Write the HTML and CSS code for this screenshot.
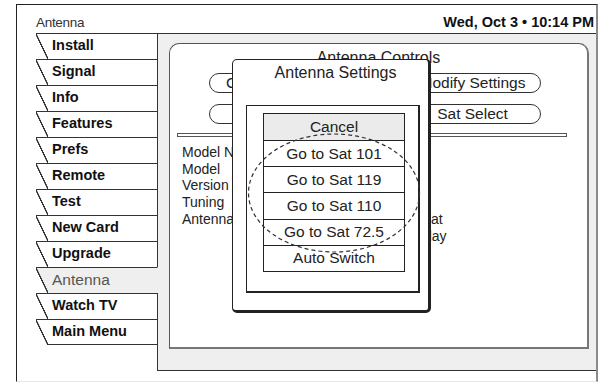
FILE: index.html
```html
<!DOCTYPE html>
<html>
<head>
<meta charset="utf-8">
<link rel="stylesheet" href="styles.css">
</head>
<body>
<div class="screen">
  <header class="top">
    <span class="crumb">Antenna</span>
    <span class="clock">Wed, Oct 3 &#8226; 10:14 PM</span>
  </header>
  <div class="body">
    <nav class="tabs">
      <div class="tab">Install</div>
      <div class="tab">Signal</div>
      <div class="tab">Info</div>
      <div class="tab">Features</div>
      <div class="tab">Prefs</div>
      <div class="tab">Remote</div>
      <div class="tab">Test</div>
      <div class="tab">New Card</div>
      <div class="tab">Upgrade</div>
      <div class="tab sel">Antenna</div>
      <div class="tab">Watch TV</div>
      <div class="tab last">Main Menu</div>
      <div class="tab-fill"></div>
    </nav>
    <main class="panel">
      <section class="card">
        <h1 class="card-title">Antenna Controls</h1>
        <div class="pills">
          <span class="pill pill-left">Check Switch</span>
          <span class="pill pill-right">Modify Settings</span>
        </div>
        <div class="pills second">
          <span class="pill pill-left">Test</span>
          <span class="pill pill-right">Sat Select</span>
        </div>
        <div class="rule"></div>
        <div class="info">
          <span>Model Name</span><span></span>
          <span>Model</span><span></span>
          <span>Version</span><span></span>
          <span>Tuning</span><span></span>
          <span>Antenna</span><span>Dual Sat</span>
          <span></span><span>No Relay</span>
        </div>
        <div class="dialog">
          <div class="dialog-title">Antenna Settings</div>
          <div class="dialog-box">
            <div class="list">
              <div class="item cancel">Cancel</div>
              <div class="item">Go to Sat 101</div>
              <div class="item">Go to Sat 119</div>
              <div class="item">Go to Sat 110</div>
              <div class="item">Go to Sat 72.5</div>
              <div class="item">Auto Switch</div>
            </div>
          </div>
          <svg class="ring" width="174" height="122" viewBox="0 0 174 122">
            <ellipse cx="87" cy="61" rx="85.5" ry="59" fill="none" stroke="#333" stroke-width="1.2" stroke-dasharray="4 3"/>
          </svg>
        </div>
      </section>
    </main>
  </div>
</div>
</body>
</html>
```
FILE: styles.css
```css
* { box-sizing: border-box; }
html, body { margin: 0; padding: 0; background: #fff; }
body {
  font-family: "Liberation Sans", Arial, sans-serif;
  color: #222;
}
.screen {
  margin: 4px 2px 0 16px;
  height: 378px;
  border-top: 1px solid #222;
  border-left: 1px solid #222;
  border-right: 2px solid #8a8a8a;
  border-bottom: 1px solid #e6e6e6;
  display: flex;
  flex-direction: column;
}
.top {
  height: 28px;
  display: flex;
  justify-content: space-between;
  align-items: baseline;
  padding: 9px 2px 0 19px;
  line-height: 16px;
}
.crumb { color: #333; font-size: 13.5px; letter-spacing: -0.3px; }
.clock { font-weight: bold; color: #111; font-size: 14.5px; }
.body { display: flex; height: 338px; }
.tabs {
  width: 122px;
  margin-left: 19px;
  display: flex;
  flex-direction: column;
}
.tab {
  height: 26px;
  flex: none;
  border-top: 1px solid #333;
  border-right: 1px solid #333;
  padding-left: 16px;
  line-height: 22px;
  font-weight: bold;
  font-size: 14.5px;
  color: #111;
  background:
    linear-gradient(to top right, #fff calc(50% - 0.9px), #333 calc(50% - 0.5px), #333 calc(50% + 0.5px), #fff calc(50% + 0.9px)) 0 0 / 12px 100% no-repeat;
}
.tab.sel {
  font-weight: normal;
  font-size: 15.5px;
  line-height: 24px;
  color: #555;
  border-right-color: #efefef;
  background:
    linear-gradient(to top right, #fff calc(50% - 0.9px), #333 calc(50% - 0.5px), #333 calc(50% + 0.5px), #efefef calc(50% + 0.9px)) 0 0 / 12px 100% no-repeat,
    linear-gradient(#efefef, #efefef) 12px 0 / calc(100% - 12px) 100% no-repeat;
}
.tab.last {
  background:
    linear-gradient(to top right, #fff calc(50% - 0.9px), #333 calc(50% - 0.5px), #333 calc(50% + 0.5px), #fff calc(50% + 0.9px)) 0 0 / 12px 100% no-repeat,
    linear-gradient(#333, #333) 12px 100% / calc(100% - 12px) 1px no-repeat;
}
.tab-fill { flex: 1; border-right: 1px solid #333; }
.panel {
  flex: 1;
  display: flex;
  background: #efefef;
  border-top: 1px solid #333;
  border-bottom: 1px solid #333;
  padding: 9px 7px 21px 11px;
}
.card {
  flex: 1;
  position: relative;
  background: #fff;
  border: 1px solid #555;
  border-right: 2px solid #777;
  border-bottom: 2px solid #777;
  border-radius: 10px 10px 0 0;
  padding-top: 4px;
}
.card-title {
  margin: 0;
  font-size: 16px;
  font-weight: normal;
  line-height: 19px;
  text-align: center;
  color: #222;
}
.pills {
  display: flex;
  gap: 67px;
  margin: 6px 0 0 39px;
}
.pills.second { margin-top: 11px; }
.pill {
  height: 20px;
  border: 1px solid #333;
  border-radius: 10px;
  font-size: 15.5px;
  line-height: 18px;
  text-align: center;
  white-space: nowrap;
  background: #fff;
}
.pill-left { width: 128px; }
.pill-right { width: 137px; }
.rule {
  width: 390px;
  height: 4px;
  margin: 9px 0 0 7px;
  border: 1px solid #555;
}
.info {
  display: grid;
  grid-template-columns: 207px auto;
  margin: 7px 0 0 12px;
  font-size: 14px;
  line-height: 16.7px;
}
.dialog {
  position: absolute;
  left: 62px;
  top: 15px;
  width: 199px;
  height: 254px;
  background: #fff;
  border: 1px solid #222;
  border-right: 3px solid #222;
  border-bottom: 3px solid #222;
  border-radius: 5px;
  padding: 3px 8px 0 13px;
}
.dialog-title {
  font-size: 16px;
  line-height: 19px;
  text-align: center;
  margin-left: -3px;
  margin-right: -8px;
}
.dialog-box {
  margin-top: 23px;
  height: 188px;
  border: 1px solid #222;
  border-right: 2px solid #222;
  border-bottom: 2px solid #222;
  padding: 7px 0 0 16px;
}
.list {
  width: 142px;
  height: 159px;
  border: 1px solid #222;
  display: grid;
  grid-template-rows: repeat(6, 1fr);
}
.item {
  border-top: 1px solid #222;
  font-size: 15.5px;
  display: flex;
  align-items: center;
  justify-content: center;
  white-space: nowrap;
  color: #222;
}
.item.cancel { border-top: 0; background: #ebebeb; }
.ring {
  position: absolute;
  left: 14px;
  top: 72px;
}
```
